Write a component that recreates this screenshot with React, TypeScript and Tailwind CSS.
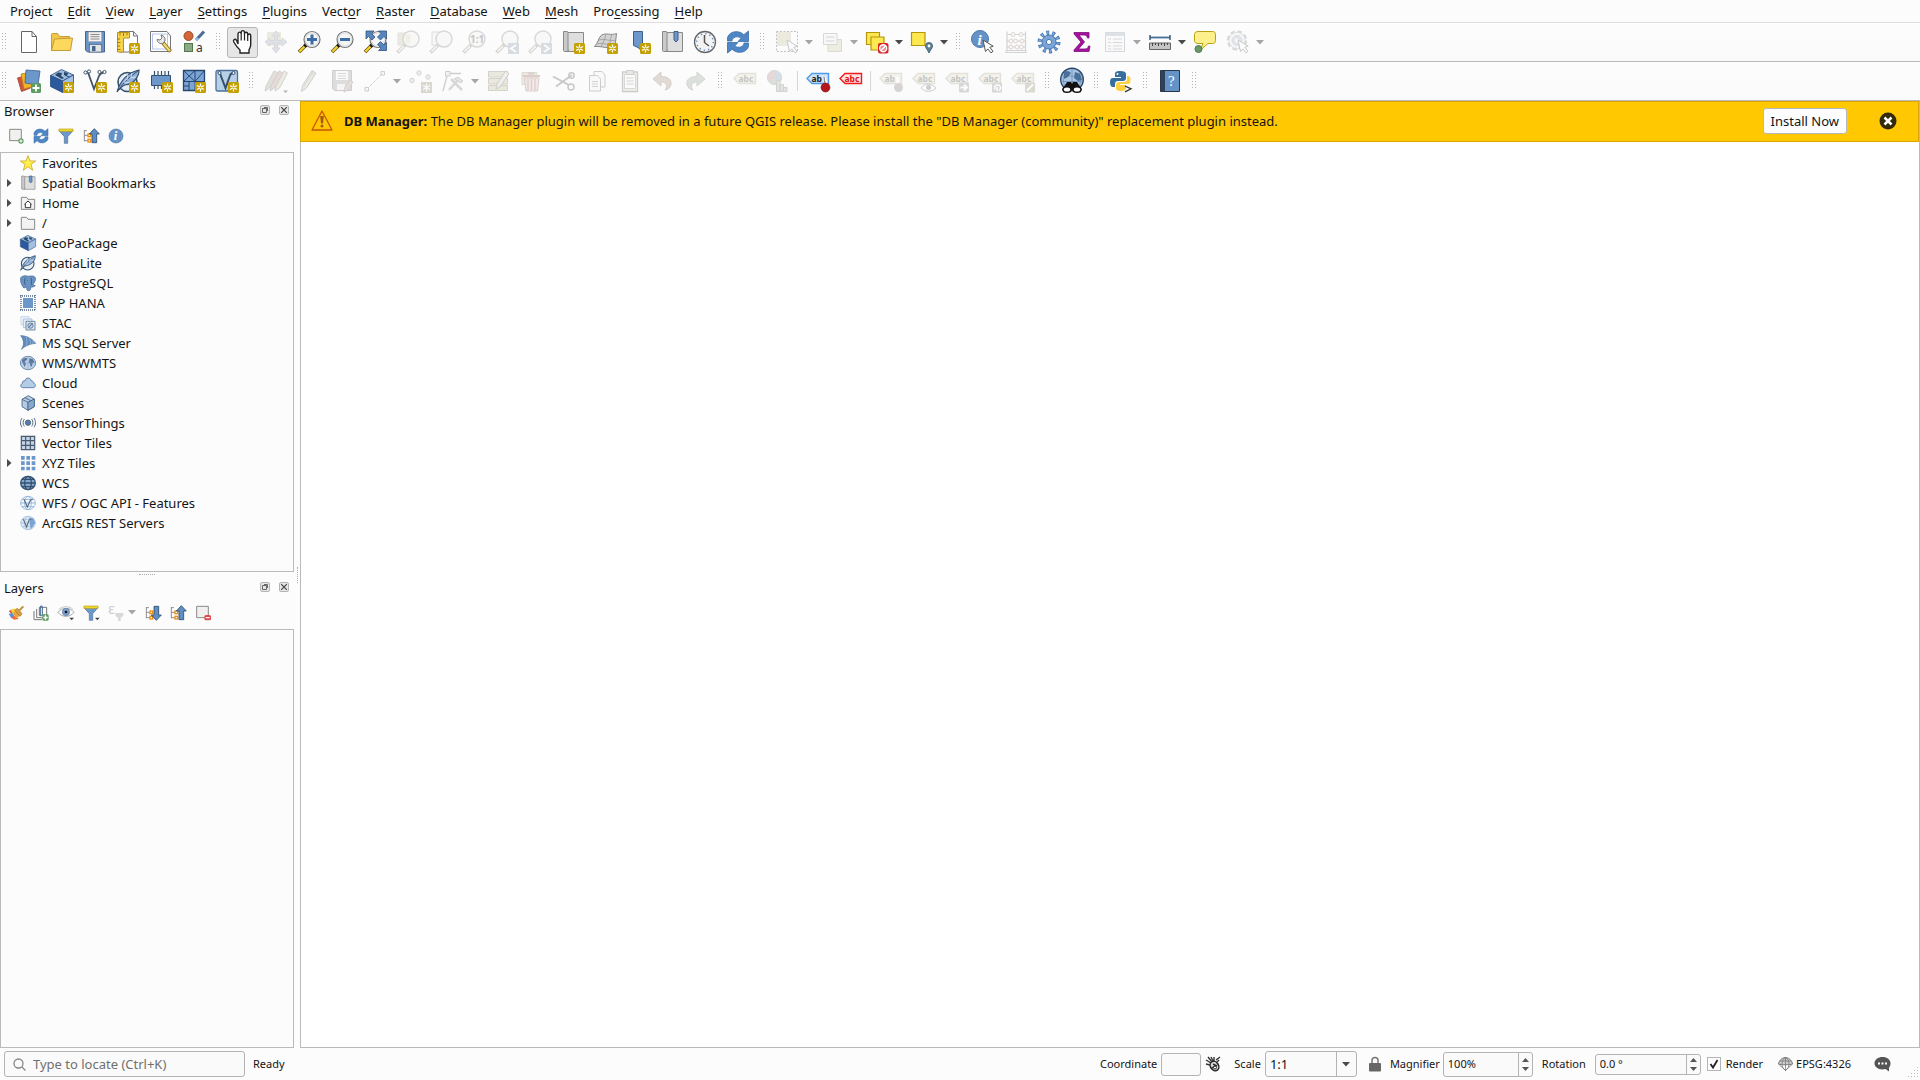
import React, { useState } from 'react';
import clsx from 'clsx';

type Tool = {
  name: string;
  icon?: React.ReactNode;
  disabled?: boolean;
  menu?: boolean;
  active?: boolean;
  separator?: boolean;
};

const Svg = ({ size = 24, children }: any) => (
  <svg width={size} height={size} viewBox="0 0 24 24" fill="none" className="block shrink-0 overflow-visible" aria-hidden="true">
    {children}
  </svg>
);

/* shared icon parts */
const NewBadge = () => (
  <g>
    <rect x="13" y="13" width="11" height="11" rx="1.5" fill="#c4a000" />
    <path d="M18.5 14.5v8M15 16.5l7 4M22 16.5l-7 4" stroke="#fff" strokeWidth="1.3" />
    <circle cx="18.5" cy="18.5" r="1" fill="#c4a000" />
  </g>
);

const Lens = () => (
  <g>
    <path d="M10 14 2 22" stroke="#5a4a10" strokeWidth="3.6" />
    <path d="M8 16 2.4 21.6" stroke="#f5cf2c" strokeWidth="2.2" />
    <path d="m7.5 16.5 2.5-2.5" stroke="#111" strokeWidth="3.4" />
    <circle cx="15" cy="9.5" r="8" fill="#f4f6f8" stroke="#777" strokeWidth="1.2" />
    <circle cx="15" cy="9.5" r="6.5" stroke="#ddd" />
  </g>
);

const GreyLens = () => (
  <g>
    <path d="M10 14 1.5 22.5" stroke="#777" strokeWidth="3.6" />
    <path d="M8 16 2.4 21.6" stroke="#e6e2c8" strokeWidth="1.8" />
    <circle cx="15" cy="9" r="8" fill="#f1f1f1" stroke="#888" strokeWidth="1.4" />
  </g>
);

const Cursor = () => (
  <path d="m12 10 2.5 11.5 2.3-2.6 3.2 4 2-1.600-3.200-4 3.400-1.100z" fill="#fff" stroke="#555" />
);

const RefreshArt = () => (
  <g fill="#4f86c6" stroke="#3a6ca8" strokeWidth=".8">
    <path d="M1.5 11V7.5C3 3 8 .8 13 2c2 .5 3.500 1.500 4.800 2.800L22.500 1v10.500H12l3-3.200c-2-2.200-6-2-8 .2-.7.700-1 1.600-1 2.500z" />
    <path d="M22.5 13v3.500c-1.500 4.500-6.500 6.700-11.500 5.500-2-.5-3.500-1.500-4.800-2.800L1.500 23V12.500H12l-3 3.200c2 2.200 6 2 8-.2.700-.7 1-1.600 1-2.500z" />
  </g>
);

const Feather = () => (
  <g>
    <circle cx="11.5" cy="13" r="9.5" fill="#e6edf5" stroke="#34516e" strokeWidth="1.6" />
    <path d="M1 23C4 13 10 4 23 1c0 7-5 14-14 15-3 1-5 3-8 7z" fill="#8fb0d8" stroke="#34516e" strokeWidth="1.2" />
    <path d="M3 21C7 14 13 8 22 2" stroke="#34516e" />
    <path d="m8 14 2-4m1 1 1-5m3 2 1-4M9 14l5-1m0-4 6-1" stroke="#e6edf5" strokeWidth=".8" />
  </g>
);

const PackageArt = () => (
  <g stroke="#274b7c" strokeWidth=".8">
    <path d="M.5 6.5 11.500.5l12 5.500-11 6z" fill="#9ebde0" />
    <path d="M.5 6.5 12.5 12v11.500L.5 17.500z" fill="#2c5a9e" />
    <path d="M12.5 12l11-6v11.500l-11 6z" fill="#a3c0e2" />
    <path d="m5 6 3-2.500 4 .5-1 3 3 2-2 1zM14 3l4 1-1 3h3l-2 1-4-2z" fill="#284668" stroke="none" />
  </g>
);

const GlobeArt = () => (
  <g>
    <ellipse cx="12" cy="12" rx="11.5" ry="10" fill="#bdd1e8" stroke="#5f80a5" strokeWidth="1.3" />
    <path d="M3 8c2-3 5-4 8-3l-1 3-3 1 2 4-2 5c-1-3-4-6-4-10zM14 5l5 1 3 5-3 1-1 4-2 2-1-5-2-2 1-3z" fill="#56779e" />
    <path d="M1 12h22M12 2v20" stroke="#8faccc" strokeWidth=".8" />
  </g>
);

const WireGlobe = ({ color, fill, width = 1.3 }: any) => (
  <g stroke={color} strokeWidth={width}>
    <ellipse cx="12" cy="12" rx="11" ry="10" fill={fill} />
    <ellipse cx="12" cy="12" rx="5" ry="10" />
    <path d="M1 12h22M3 6.500h18M3 17.500h18" />
  </g>
);

const BookArt = () => (
  <g>
    <path d="M6 2.5h16.500v19H7V19H2.500" fill="#dedede" stroke="#888" />
    <path d="M2.5 1.5h3.500c1 0 1 1 1 1v19H3.500c-1 0-1-1-1-1z" fill="#c9c9c9" stroke="#888" />
  </g>
);

const BookmarkArt = () => (
  <g>
    <BookArt />
    <path d="M14 1.5h4V10l-2 2-2-2z" fill="#6b97ca" stroke="#3c5f8b" />
  </g>
);

const TagArt = ({ text = 'abc', fill = '#e0ddc6', stroke = '#aaa78f', color = '#444' }: any) => (
  <g>
    <path d="M6 4.5h16.500v10H6l-5-5z" fill={fill} stroke={stroke} strokeWidth="1.4" />
    <text x="5.5" y="12.5" fontSize="8.5" fontWeight="700" fontFamily="Noto Sans, sans-serif" fill={color}>
      {text}
    </text>
  </g>
);

const TreeLines = () => (
  <g>
    <path d="M2 3v17M2 4h4M2 11h6M2 19h6" stroke="#888" strokeWidth="1.4" />
    <rect x="7.5" y="9" width="4" height="4" fill="#fff" stroke="#f28c13" strokeWidth="2" />
    <rect x="7.5" y="17" width="4" height="4" fill="#fff" stroke="#f28c13" strokeWidth="2" />
  </g>
);

const CollapseArt = () => (
  <g>
    <TreeLines />
    <path d="M17 1 9.5 9h4v13h7V9h4z" fill="#5f8ec2" stroke="#27466b" strokeWidth="1.2" />
  </g>
);

const ExpandArt = () => (
  <g>
    <TreeLines />
    <path d="m17 23-7.500-8h4V2h7v13h4z" fill="#5f8ec2" stroke="#27466b" strokeWidth="1.2" />
  </g>
);

const FunnelArt = () => (
  <g>
    <path d="M1.5 4h21l-8 9v10h-5V13z" fill="#6c98cc" stroke="#4a6f99" />
    <path d="M1.5 1.5h21V5h-21z" fill="#f4dc2b" stroke="#b79e17" />
  </g>
);

const fileTools: Tool[] = [
  {
    name: 'New Project',
    icon: (
      <Svg>
        <path d="M4.5 1.5H15l4.500 5v16h-15z" fill="#fff" stroke="#666" />
        <path d="M15 1.5v5h4.500" stroke="#666" />
      </Svg>
    ),
  },
  {
    name: 'Open Project',
    icon: (
      <Svg>
        <path d="M1.500 20.5V4.500c0-.6.400-1 1-1h5l2 3h10v3" fill="#f3c84a" stroke="#c39a35" />
        <path d="m1.500 20.5 3-11.500 18-1-2 12.500z" fill="#fdd85d" stroke="#c39a35" />
      </Svg>
    ),
  },
  {
    name: 'Save Project',
    icon: (
      <Svg>
        <path d="M2.5 1.5h19v20.500H4.500l-2-2z" fill="#6b94c6" stroke="#46658d" />
        <rect x="5.5" y="2" width="13" height="9.5" fill="#f2f2f2" stroke="#aaa" strokeWidth=".6" />
        <path d="M7.5 4.5h9M7.5 6.700h9M7.5 9h9" stroke="#888" />
        <rect x="6.5" y="14.5" width="12" height="7.5" fill="#e4e4e4" stroke="#46658d" strokeWidth=".7" />
        <rect x="9" y="16" width="3.5" height="5" fill="#46658d" />
      </Svg>
    ),
  },
  {
    name: 'New Print Layout',
    icon: (
      <Svg>
        <path d="M3.5 1.5h14l4 4.500v16h-18z" fill="#fff" stroke="#777" />
        <path d="M17.5 1.5V6h4" stroke="#777" />
        <path d="M1.500 2.500h12v5.500H7.500v14h-6z" fill="#f7d34a" stroke="#b8921b" />
        <path d="M4 3v2.500M7.500 3v3M11 3v2.500M1 9h3M1 12.500h3.500M1 16h3M1 19.500h3.500" stroke="#9b7a12" />
        <NewBadge />
      </Svg>
    ),
  },
  {
    name: 'Layout Manager',
    icon: (
      <Svg>
        <path d="M1.5 1.5H18l3.500 4.500v15.500h-20z" fill="#fff" stroke="#777" />
        <rect x="3.5" y="4" width="15" height="15" stroke="#b4c6ee" />
        <path d="m14 13 7.500 8.500" stroke="#8b7216" strokeWidth="4" />
        <path d="m14.500 13.500 6.500 7.500" stroke="#f0d77a" strokeWidth="2.2" />
        <path d="M8 9.500c.5 3.500 3.500 4.500 5.500 4l2.500-2.500c.5-3-1-5.500-4-6l1 3-2 2z" fill="#e8e8e8" stroke="#777" />
      </Svg>
    ),
  },
  {
    name: 'Style Manager',
    icon: (
      <Svg>
        <circle cx="6.5" cy="6" r="4.5" fill="#d2683a" stroke="#9c4420" />
        <path d="m14 10 8-8.500" stroke="#4a6f99" strokeWidth="3.2" />
        <path d="m14 10 2-2" stroke="#9dbbe0" strokeWidth="3" />
        <rect x="2.5" y="13.5" width="8" height="8" fill="#8aa984" stroke="#4f7a4a" />
        <text x="14" y="22" fontSize="12" fontFamily="Noto Sans, sans-serif" fill="#333">
          a
        </text>
      </Svg>
    ),
  },
];

const navTools: Tool[] = [
  {
    name: 'Pan Map',
    active: true,
    icon: (
      <Svg>
        <path
          d="M7 14V4c0-2.500 3.200-2.500 3.200 0V2.500c0-2.500 3.300-2.500 3.300 0V4c0-2.300 3.200-2.300 3.200 0v1.500c0-2 3-2 3 0V15c0 2-1 3-1.700 5v3H9v-3C6.500 18 4.500 15 2.800 12c-1.200-2.400 1.400-3.600 2.700-1.700z"
          fill="#fff"
          stroke="#222"
          strokeWidth="1.4"
        />
        <path d="M10.200 4v6.500M13.500 4v6.500M16.700 5v6" stroke="#222" strokeWidth="1.2" />
      </Svg>
    ),
  },
  {
    name: 'Pan Map to Selection',
    disabled: true,
    icon: (
      <Svg>
        <rect x="3" y="2" width="14" height="14" fill="#c9c49c" />
        <path
          d="m12 1 4 5h-2.500v4.500H18V8l5 4-5 4v-2.500h-4.500V18H16l-4 5-4-5h2.500v-4.500H6V16l-5-4 5-4v2.500h4.500V6H8z"
          fill="#9aa5b3"
          stroke="#7f8a98"
        />
      </Svg>
    ),
  },
  {
    name: 'Zoom In',
    icon: (
      <Svg>
        <Lens />
        <path d="M15 4.500v10M10 9.500h10" stroke="#3c6ca4" strokeWidth="3" />
      </Svg>
    ),
  },
  {
    name: 'Zoom Out',
    icon: (
      <Svg>
        <Lens />
        <path d="M10 9.500h10" stroke="#3c6ca4" strokeWidth="3" />
      </Svg>
    ),
  },
  {
    name: 'Zoom Full',
    icon: (
      <Svg>
        <Lens />
        <g fill="#5686bd" stroke="#2f5482" strokeWidth=".8">
          <path d="M3 1h8L8.500 3.500 12 7 9 10 5.500 6.500 3 9z" />
          <path d="M23.500 1h-8L18 3.500 14.500 7l3 3L21 6.500 23.500 9z" />
          <path d="M23.500 20.500h-8L18 18l-3.500-3.500 3-3L21 15l2.500-2.500z" />
        </g>
      </Svg>
    ),
  },
  {
    name: 'Zoom to Selection',
    disabled: true,
    icon: (
      <Svg>
        <rect x="2" y="3" width="12" height="12" fill="#c9c49c" stroke="#aaa" />
        <GreyLens />
        <path d="M9.500 4.500h5v9h-5z" fill="#d8d4b4" />
      </Svg>
    ),
  },
  {
    name: 'Zoom to Layer',
    disabled: true,
    icon: (
      <Svg>
        <rect x="3" y="2" width="11" height="13" fill="#f0f0f0" stroke="#999" />
        <GreyLens />
      </Svg>
    ),
  },
  {
    name: 'Zoom to Native Resolution',
    disabled: true,
    icon: (
      <Svg>
        <GreyLens />
        <text x="8" y="12.500" fontSize="10" fontWeight="700" fontFamily="Noto Sans, sans-serif" fill="#444">
          1:1
        </text>
      </Svg>
    ),
  },
  {
    name: 'Zoom Last',
    disabled: true,
    icon: (
      <Svg>
        <GreyLens />
        <rect x="13" y="13" width="11" height="11" fill="#8597ab" />
        <path d="m21 15-5 3.500 5 3.500" stroke="#fff" strokeWidth="2" />
      </Svg>
    ),
  },
  {
    name: 'Zoom Next',
    disabled: true,
    icon: (
      <Svg>
        <GreyLens />
        <rect x="13" y="13" width="11" height="11" fill="#8597ab" />
        <path d="m16 15 5 3.500-5 3.500" stroke="#fff" strokeWidth="2" />
      </Svg>
    ),
  },
  {
    name: 'New Map View',
    icon: (
      <Svg>
        <BookArt />
        <NewBadge />
      </Svg>
    ),
  },
  {
    name: 'New 3D Map View',
    icon: (
      <Svg>
        <path d="M7 5.500C12 2 17 6 22.500 3.500L21 17C14 19 8 16 .5 16.500 4 13 4 9 7 5.500z" fill="#d4d4d4" stroke="#888" />
        <path d="M5 10c6-2 11 2 17 0M3 14c6-2 12 2 18 0M12 4.500C11 9 9 13 7 16.500M17.500 5 15 17" stroke="#999" strokeWidth=".8" />
        <NewBadge />
      </Svg>
    ),
  },
  {
    name: 'New Spatial Bookmark',
    icon: (
      <Svg>
        <path d="M6.500 1.500h9v20l-4.500-4-4.500-2z" fill="#6b97ca" stroke="#3c5f8b" />
        <NewBadge />
      </Svg>
    ),
  },
  {
    name: 'Show Spatial Bookmarks',
    icon: (
      <Svg>
        <BookmarkArt />
      </Svg>
    ),
  },
  {
    name: 'Temporal Controller',
    icon: (
      <Svg>
        <circle cx="12" cy="12" r="10.500" fill="#f3f3f3" stroke="#666" strokeWidth="1.3" />
        <circle cx="12" cy="12" r="8.3" stroke="#5b8ac0" strokeWidth="1.5" strokeDasharray="1.2 3.146" />
        <path d="M11.500 5v7.500l4.500 3.500" stroke="#555" strokeWidth="1.5" />
      </Svg>
    ),
  },
  {
    name: 'Refresh',
    icon: (
      <Svg>
        <RefreshArt />
      </Svg>
    ),
  },
];

const selectTools: Tool[] = [
  {
    name: 'Select Features',
    disabled: true,
    menu: true,
    icon: (
      <Svg>
        <rect x="2" y="2" width="14" height="14" fill="#c9c49c" />
        <path d="M1.500 1.500h21v20h-21z" stroke="#444" strokeDasharray="2 1.500" />
        <Cursor />
      </Svg>
    ),
  },
  {
    name: 'Select Features by Value',
    disabled: true,
    menu: true,
    icon: (
      <Svg>
        <path d="M8 9.500h13.500v12H8z" fill="#d0cba6" stroke="#999070" />
        <path d="M3.500 3.500H17v11H3.500z" fill="#f2f2f2" stroke="#888" />
        <path d="M6 7h8.500M6 11h8.500" stroke="#777" />
      </Svg>
    ),
  },
  {
    name: 'Deselect Features',
    menu: true,
    icon: (
      <Svg>
        <path d="M1.500 2.500h13v12h-13z" fill="#fde84f" stroke="#b8960c" strokeWidth="1.2" />
        <path d="M6 7h13v13H6z" fill="#fde84f" stroke="#b8960c" strokeWidth="1.2" />
        <rect x="13" y="13" width="10.5" height="10.5" rx="2" fill="#d8232a" />
        <circle cx="18.2" cy="18.2" r="3.5" fill="#e98b8e" stroke="#fff" strokeWidth="1.4" />
        <path d="m16 20.500 4.500-4.500" stroke="#fff" strokeWidth="1.4" />
      </Svg>
    ),
  },
  {
    name: 'Select by Location',
    menu: true,
    icon: (
      <Svg>
        <path d="M1.500 2.500H15v13H1.500z" fill="#fde84f" stroke="#b8960c" strokeWidth="1.2" />
        <path d="M19 23c-1-3-3.500-4.500-3.500-7a3.500 3.500 0 0 1 7 0c0 2.500-2.500 4-3.500 7z" fill="#5d8199" stroke="#486879" />
        <circle cx="19" cy="16" r="1.4" fill="#fff" />
      </Svg>
    ),
  },
];

const attributeTools: Tool[] = [
  {
    name: 'Identify Features',
    icon: (
      <Svg>
        <circle cx="9" cy="9" r="8.5" fill="#6693c7" stroke="#4e79ab" />
        <text x="6.5" y="14.5" fontSize="15" fontStyle="italic" fontWeight="700" fontFamily="Liberation Serif, serif" fill="#fff">
          i
        </text>
        <Cursor />
      </Svg>
    ),
  },
  {
    name: 'Field Calculator',
    disabled: true,
    icon: (
      <Svg>
        <path d="M3 1.500v20M21.500 1.500v20M1 22.500h22M1.500 20.500h21M3 4.500h18M3 11h18M3 17h18" stroke="#777" strokeWidth="1.2" />
        <g fill="#f5eeee" stroke="#977">
          <circle cx="9" cy="4.5" r="2" />
          <circle cx="17" cy="4.5" r="2" />
          <circle cx="7" cy="11" r="2" />
          <circle cx="11.5" cy="11" r="2" />
          <circle cx="18" cy="11" r="2" />
          <circle cx="7" cy="17" r="2" />
          <circle cx="13" cy="17" r="2" />
          <circle cx="17.5" cy="17" r="2" />
        </g>
      </Svg>
    ),
  },
  {
    name: 'Processing Toolbox',
    icon: (
      <Svg>
        <circle cx="12" cy="12" r="9.3" stroke="#4679b5" strokeWidth="4.4" strokeDasharray="2.9 2.943" />
        <circle cx="12" cy="12" r="9.3" stroke="#7ba5d8" strokeWidth="2.8" strokeDasharray="1.5 4.343" strokeDashoffset="-.7" />
        <circle cx="12" cy="12" r="7" fill="#7ba5d8" stroke="#4679b5" />
        <circle cx="12" cy="12" r="2.6" fill="#fff" stroke="#4679b5" />
      </Svg>
    ),
  },
  {
    name: 'Statistical Summary',
    icon: (
      <Svg>
        <path d="M4 2.500h15V8h-1.500c-.5-2-1.500-3-3.500-3H9l5.500 7L8.500 19H15c2 0 3-1 3.500-3H20l-1 5.500H4V20l7-8-7-8z" fill="#a8109f" stroke="#7c0f78" strokeWidth=".8" />
      </Svg>
    ),
  },
  {
    name: 'Open Attribute Table',
    disabled: true,
    menu: true,
    icon: (
      <Svg>
        <path d="M2.500 2.500h19v19h-19z" fill="#f7f7f7" stroke="#7e8894" />
        <path d="M2.500 2.500h19V6h-19z" fill="#9ba6b3" />
        <path d="M5 9h3M10 9h9M5 12.500h3M10 12.500h9M5 16h3M10 16h9M5 19h3M10 19h9" stroke="#7e8894" strokeWidth="1.2" />
      </Svg>
    ),
  },
  {
    name: 'Measure Line',
    menu: true,
    icon: (
      <Svg>
        <path d="M2 7.500h20" stroke="#4a6f99" strokeWidth="1.8" />
        <path d="M2 5v5M22 5v5" stroke="#34516e" strokeWidth="1.4" />
        <path d="M1.500 13h21v6.500h-21z" fill="#c4c4c4" stroke="#666" />
        <path d="M4.500 13v3M7.500 13v2M10.500 13v3M13.500 13v2M16.500 13v3M19.500 13v2" stroke="#444" />
      </Svg>
    ),
  },
  {
    name: 'Map Tips',
    icon: (
      <Svg>
        <path d="M5 1.500h14.500c2 0 3 1 3 3v6c0 2-1 3-3 3H15L7.500 20 10 13.500H5c-2 0-3.500-1-3.500-3v-6c0-2 1.500-3 3.500-3z" fill="#fdf08c" stroke="#b9a008" />
        <circle cx="5.5" cy="19" r="3.5" fill="#699a66" stroke="#4f7a4a" />
      </Svg>
    ),
  },
  {
    name: 'Run Feature Action',
    disabled: true,
    menu: true,
    icon: (
      <Svg>
        <circle cx="11" cy="10.5" r="9" stroke="#888" strokeWidth="2.4" strokeDasharray="4.5 2.6" />
        <circle cx="11" cy="10.5" r="8" fill="#eee" stroke="#999" />
        <circle cx="11" cy="10.5" r="5" fill="#a7b3c0" stroke="#8f9aa6" />
        <path d="m9.500 8 4 2.500-4 2.500z" fill="#fff" />
        <Cursor />
      </Svg>
    ),
  },
];

const sourceTools: Tool[] = [
  {
    name: 'Data Source Manager',
    icon: (
      <Svg>
        <path d="m.5 9 10-3 3 13-9 3.500z" fill="#d2553a" stroke="#a03a24" strokeWidth=".8" />
        <path d="m4 5 11-2 3 14-11 3z" fill="#f0b429" stroke="#b5831a" strokeWidth=".8" />
        <path d="m9 1 14 1-2 14-13-2z" fill="#6b97ca" stroke="#3c5f8b" strokeWidth=".8" />
        <rect x="14" y="14" width="10" height="10" rx="1.5" fill="#5d9d63" />
        <path d="M19 15.500v7M15.500 19h7" stroke="#fff" strokeWidth="1.8" />
      </Svg>
    ),
  },
  {
    name: 'New GeoPackage Layer',
    icon: (
      <Svg>
        <PackageArt />
        <NewBadge />
      </Svg>
    ),
  },
  {
    name: 'New Shapefile Layer',
    icon: (
      <Svg>
        <path d="M2 3.500h3L11 20l5-13c1-2.500 3-3.500 5.500-4" stroke="#41546a" strokeWidth="1.8" />
        <circle cx="2.5" cy="3.5" r="1.6" fill="#fff" stroke="#41546a" />
        <circle cx="6" cy="2.5" r="1.6" fill="#fff" stroke="#41546a" />
        <circle cx="16.5" cy="3" r="1.6" fill="#fff" stroke="#41546a" />
        <circle cx="21.5" cy="3" r="1.6" fill="#fff" stroke="#41546a" />
        <NewBadge />
      </Svg>
    ),
  },
  {
    name: 'New SpatiaLite Layer',
    icon: (
      <Svg>
        <Feather />
        <NewBadge />
      </Svg>
    ),
  },
  {
    name: 'New Temporary Scratch Layer',
    icon: (
      <Svg>
        <path d="M5.500 2v18M9 2v18M12.500 2v18M16 2v18M19.500 2v18" stroke="#34516e" strokeWidth="1.2" />
        <path d="M2.500 6.500h19v10h-19z" fill="#6b97ca" stroke="#34516e" />
        <NewBadge />
      </Svg>
    ),
  },
  {
    name: 'New Mesh Layer',
    icon: (
      <Svg>
        <path d="M1.500 1.500h21v20h-21z" fill="#7ba5d8" stroke="#27466b" strokeWidth="1.3" />
        <path d="M1.500 12.500h21M13 1.500v20M1.500 1.500l11.500 11M13 1.500l-11.500 11M13 12.500l9.500-11M7 12.500v9M1.500 17H7" stroke="#27466b" />
        <NewBadge />
      </Svg>
    ),
  },
  {
    name: 'New Virtual Layer',
    icon: (
      <Svg>
        <rect x="1" y="1.5" width="21.5" height="20.5" rx="1.5" fill="#b8cfe8" stroke="#4a6f99" strokeWidth="1.3" />
        <path d="M5 4.500 10.500 19 15 6.500c.5-2 2-2.500 4-2.500" stroke="#34516e" strokeWidth="2" />
        <circle cx="4.5" cy="4" r="1.5" fill="#fff" stroke="#34516e" />
        <circle cx="18.5" cy="4" r="1.5" fill="#fff" stroke="#34516e" />
        <NewBadge />
      </Svg>
    ),
  },
];

const editTools: Tool[] = [
  {
    name: 'Current Edits',
    disabled: true,
    icon: (
      <Svg>
        <path d="m1 22 1-5 8-15 4 2L5.500 19z" fill="#a8a18c" stroke="#776" />
        <path d="m6 22 1-5 8-15 4 2-8.500 15z" fill="#b58f88" stroke="#866" />
        <path d="m11 22 1-5 8-15 3.500 2-8 15z" fill="#c9c4a6" stroke="#776" />
        <path d="M19 21.500h5L21.500 24z" fill="#111" />
      </Svg>
    ),
  },
  {
    name: 'Toggle Editing',
    disabled: true,
    icon: (
      <Svg>
        <path d="m4.500 22.500 1-6L15 1.500l4 2.500-9.500 15z" fill="#c9c4a6" stroke="#666" />
        <path d="m13.500 4 4 2.500M7 17 16 3" stroke="#888" />
      </Svg>
    ),
  },
  {
    name: 'Save Layer Edits',
    disabled: true,
    icon: (
      <Svg>
        <path d="M2.500 1.500h19v20h-17l-2-2z" fill="#999" stroke="#666" />
        <path d="M6 2h12v9H6z" fill="#f4f4f4" />
        <path d="M8 4.500h8M8 7h8M8 9.500h8" stroke="#888" />
        <path d="M7 15h8v6H7z" fill="#e8e8e8" />
        <path d="m14 23 1-5 5-7 3 2-5 8z" fill="#b5a090" stroke="#866" />
      </Svg>
    ),
  },
  {
    name: 'Digitize with Segment',
    disabled: true,
    menu: true,
    icon: (
      <Svg>
        <path d="m4 20 15-15" stroke="#666" strokeDasharray="3 1.500" />
        <path d="M2 18.500h3.500V22H2zM18 2.500h3.500V6H18z" fill="#eee" stroke="#666" />
      </Svg>
    ),
  },
  {
    name: 'Add Record',
    disabled: true,
    icon: (
      <Svg>
        <g fill="#ccc" stroke="#777">
          <circle cx="11" cy="4" r="2.2" />
          <circle cx="4" cy="11.500" r="2.2" />
          <circle cx="20" cy="8" r="2.2" />
        </g>
        <rect x="13" y="13" width="11" height="11" fill="#8d866a" />
        <path d="M18.500 14.500v8M15 16.500l7 4M22 16.500l-7 4" stroke="#fff" strokeWidth="1.3" />
      </Svg>
    ),
  },
  {
    name: 'Vertex Tool',
    disabled: true,
    menu: true,
    icon: (
      <Svg>
        <path d="M2 22 6.500 5M7 4.500h13" stroke="#666" strokeWidth="1.3" />
        <path d="M4.500 2.500H9V7H4.500z" fill="#ddd" stroke="#666" />
        <path d="m8 21 9-10M10 10l11 11" stroke="#888" strokeWidth="2.5" />
        <path d="m13 10 4-2 5 4-2 2z" fill="#aaa" stroke="#777" />
      </Svg>
    ),
  },
  {
    name: 'Modify Attributes',
    disabled: true,
    icon: (
      <Svg>
        <path d="M2.500 2.500h19V8h-19zM2.500 9.500h19V15h-19zM2.500 16.500h19v5h-19z" fill="#c4bf97" stroke="#7a785c" />
        <path d="m10 20 1-5L19.500 2 23 4.500 14 18z" fill="#d5cfcf" stroke="#665" />
      </Svg>
    ),
  },
  {
    name: 'Delete Selected',
    disabled: true,
    icon: (
      <Svg>
        <path d="M3 3.500h15v12H3z" fill="#c9c49c" stroke="#998" />
        <path d="M3 7h18M9 4.500h6" stroke="#966" strokeWidth="2" />
        <path d="M5.500 9H20l-1.500 13H7z" fill="#dcc0c0" stroke="#966" />
        <path d="M9 10v11M12.500 10v11M16 10v11" stroke="#966" strokeWidth="1.3" />
      </Svg>
    ),
  },
  {
    name: 'Cut Features',
    disabled: true,
    icon: (
      <Svg>
        <path d="M1 7.500 17 16M4 17.500 20 6" stroke="#555" strokeWidth="1.8" />
        <circle cx="19.5" cy="6.5" r="2.7" stroke="#555" strokeWidth="1.5" />
        <circle cx="19" cy="18" r="3" stroke="#555" strokeWidth="1.5" />
      </Svg>
    ),
  },
  {
    name: 'Copy Features',
    disabled: true,
    icon: (
      <Svg>
        <path d="M9 2.500h8l3 3.500v12H9z" fill="#f5f5f5" stroke="#666" />
        <path d="M4.500 6.500h8l3 3.500v12h-11z" fill="#f5f5f5" stroke="#666" />
        <path d="M7 12.500h6M7 15h6M7 17.500h6" stroke="#777" />
      </Svg>
    ),
  },
  {
    name: 'Paste Features',
    disabled: true,
    icon: (
      <Svg>
        <path d="M4.500 3h15v19.500h-15z" fill="#dcd7c0" stroke="#666" strokeWidth="1.3" />
        <path d="M6.500 5.500h11v14h-11z" fill="#fafafa" stroke="#888" />
        <path d="M8.500 1.500h7v4h-7z" fill="#bbb" stroke="#666" />
        <path d="M8.500 9h7M8.500 12h7M8.500 15h7" stroke="#777" />
      </Svg>
    ),
  },
  {
    name: 'Undo',
    disabled: true,
    icon: (
      <Svg>
        <path d="m2 10 8-7v4.500c7 0 11 3 10 8-.5 3-3 5-6 5.500 2-2.500 3-8-4-8V17z" fill="#a88d80" stroke="#86695a" />
      </Svg>
    ),
  },
  {
    name: 'Redo',
    disabled: true,
    icon: (
      <Svg>
        <path d="m21 10-8-7v4.500c-7 0-11 3-10 8 .5 3 3 5 6 5.500-2-2.500-3-8 4-8V17z" fill="#98a394" stroke="#788374" />
      </Svg>
    ),
  },
];

const labelTools: Tool[] = [
  {
    name: 'Layer Labeling Options',
    disabled: true,
    icon: (
      <Svg>
        <TagArt />
      </Svg>
    ),
  },
  {
    name: 'Layer Diagram Options',
    disabled: true,
    icon: (
      <Svg>
        <circle cx="8.5" cy="8.5" r="7" fill="#8fa38f" stroke="#777" />
        <path d="M8.500 8.500V1.500a7 7 0 0 1 5 12z" fill="#8398b0" />
        <path d="m8.500 8.500-6 4a7 7 0 0 1 6-11z" fill="#b88484" />
        <path d="M10.500 11.500H14v11h-3.500zM14 15.500h3.500v7H14zM17.500 18.500H21v4h-3.500z" fill="#a3b3a8" stroke="#777" />
      </Svg>
    ),
  },
  { name: 'label-options', separator: true },
  {
    name: 'Highlight Pinned Labels',
    icon: (
      <Svg>
        <TagArt text="ab" fill="#cfe4fb" stroke="#4f9be8" color="#222" />
        <path d="m18 8 2 7" stroke="#fff" strokeWidth="3" />
        <path d="m18 8 1 7" stroke="#888" strokeWidth="1.3" />
        <circle cx="19.5" cy="18.5" r="4.5" fill="#b3181e" stroke="#8a1015" strokeWidth=".6" />
      </Svg>
    ),
  },
  {
    name: 'Toggle Unplaced Labels',
    icon: (
      <Svg>
        <TagArt fill="#ffe3e3" stroke="#ee1c1c" color="#e01010" />
      </Svg>
    ),
  },
  { name: 'label-edit', separator: true },
  {
    name: 'Pin Labels',
    disabled: true,
    icon: (
      <Svg>
        <TagArt text="ab" />
        <path d="m18 8 1 7" stroke="#fff" strokeWidth="3" />
        <circle cx="19.5" cy="18.5" r="4.5" fill="#857878" />
      </Svg>
    ),
  },
  {
    name: 'Show Labels',
    disabled: true,
    icon: (
      <Svg>
        <TagArt />
        <path d="M9 19c4-5 10-5 15 0-5 4.500-11 4.500-15 0z" fill="#fff" stroke="#666" />
        <circle cx="16.5" cy="18.5" r="2.5" fill="#666" />
      </Svg>
    ),
  },
  {
    name: 'Move Label',
    disabled: true,
    icon: (
      <Svg>
        <TagArt />
        <rect x="14" y="13.5" width="10" height="10" rx="1" fill="#888" />
        <path d="M15.500 18.500h6M19 15.500l3 3-3 3" stroke="#fff" strokeWidth="1.8" />
      </Svg>
    ),
  },
  {
    name: 'Rotate Label',
    disabled: true,
    icon: (
      <Svg>
        <TagArt />
        <rect x="14" y="13.5" width="10" height="10" rx="1" fill="#888" />
        <path d="M17 20.500a3 3 0 1 1 4 1M19 18v4" stroke="#fff" strokeWidth="1.6" />
      </Svg>
    ),
  },
  {
    name: 'Change Label Properties',
    disabled: true,
    icon: (
      <Svg>
        <TagArt />
        <rect x="14" y="13.5" width="10" height="10" rx="1" fill="#959072" />
        <path d="m16 21.500 6-6" stroke="#fff" strokeWidth="2" />
      </Svg>
    ),
  },
];

const searchTools: Tool[] = [
  {
    name: 'MetaSearch',
    icon: (
      <Svg>
        <circle cx="12" cy="10.5" r="11.3" fill="#a9c4e2" stroke="#27466b" strokeWidth="1.4" />
        <path d="M1 7h22M1 12.500h22M12 0v20M5 3c-2 5-2 10 0 15M19 3c2 5 2 10 0 15" stroke="#6c8fb8" strokeWidth=".8" />
        <path d="M4 3c3-2 5-1 7 1l-3 4-4 2zM15 3l5 2 2 6-4 1-4-3z" fill="#4a6f99" />
        <path d="M7 13h4l1 2 1-2h4l5 8H2z" fill="#111" />
        <ellipse cx="7" cy="20.5" rx="4" ry="2.8" fill="#fff" stroke="#111" strokeWidth="1.5" />
        <ellipse cx="17" cy="20.5" rx="4" ry="2.8" fill="#fff" stroke="#111" strokeWidth="1.5" />
      </Svg>
    ),
  },
];

const pythonTools: Tool[] = [
  {
    name: 'Python Console',
    icon: (
      <Svg>
        <path d="M11 2c-4 0-5 1-5 3v3h6v1H4c-2.500 0-3 2-3 4.500S2 18 4 18h2v-3c0-2 1-3 3-3h5c2 0 3-1 3-3V5c0-2-2-3-6-3z" fill="#366f9e" />
        <path d="M12 22c4 0 5-1 5-3v-3h-6v-1h8c2 0 2.500-2 2.500-4S21 7 19 7h-1v3c0 2-1 3-3 3h-5c-2 0-3 1-3 3v3c0 2 1 3 5 3z" fill="#fbd13f" />
        <circle cx="8.5" cy="5" r="1" fill="#fff" />
        <path d="m16 17 6 2.800-6 3" stroke="#333" strokeWidth="1.3" />
      </Svg>
    ),
  },
];

const helpTools: Tool[] = [
  {
    name: 'Help Contents',
    icon: (
      <Svg>
        <path d="M2.500 1.500h19v21h-19z" fill="#6693c7" stroke="#27364a" />
        <path d="M2.500 1.500H7v21H2.500z" fill="#2f4157" />
        <text x="10" y="17" fontSize="15" fontFamily="Liberation Serif, serif" fill="#fff">
          ?
        </text>
      </Svg>
    ),
  },
];

const browserTools: Tool[] = [
  {
    name: 'Add Selected Layers',
    icon: (
      <Svg size={16}>
        <path d="M2.500 2H20v17H2.500z" fill="#f0f0ee" stroke="#8a8a85" strokeWidth="1.5" />
        <circle cx="19.5" cy="19.5" r="4" fill="#5d9d63" />
        <path d="M19.500 17v5M17 19.500h5" stroke="#fff" strokeWidth="1.5" />
      </Svg>
    ),
  },
  {
    name: 'Refresh Browser',
    icon: (
      <Svg size={16}>
        <RefreshArt />
      </Svg>
    ),
  },
  {
    name: 'Filter Browser',
    icon: (
      <Svg size={16}>
        <FunnelArt />
      </Svg>
    ),
  },
  {
    name: 'Collapse All',
    icon: (
      <Svg size={16}>
        <CollapseArt />
      </Svg>
    ),
  },
  {
    name: 'Enable Properties Widget',
    icon: (
      <Svg size={16}>
        <circle cx="12" cy="12" r="10.5" fill="#6693c7" stroke="#4e79ab" />
        <text x="8.5" y="18.5" fontSize="19" fontStyle="italic" fontWeight="700" fontFamily="Liberation Serif, serif" fill="#fff">
          i
        </text>
      </Svg>
    ),
  },
];

const layerTools: Tool[] = [
  {
    name: 'Open Layer Styling',
    icon: (
      <Svg size={16}>
        <path d="M1 9 8 6l3 4-6 3z" fill="#e9483b" />
        <path d="m4 7 6-2 3 6-6 2z" fill="#f8d63a" />
        <path d="m1 13 6-1 3 6-5 2z" fill="#5a8fd8" />
        <path d="m5 19 6-4 5 6-7 1z" fill="#f26a3a" />
        <path d="m7 12 5 8 8-5-6-8z" fill="#e9a63f" />
        <path d="m10 8 8 9 3-4-7-8z" fill="#d59c45" stroke="#a0702a" />
        <path d="m17 8 6-6" stroke="#c48b3a" strokeWidth="3" />
      </Svg>
    ),
  },
  {
    name: 'Add Group',
    icon: (
      <Svg size={16}>
        <path d="M1.500 9v13h12M5.500 6v13h12M9.500 3.500h11v12h-11z" stroke="#777" strokeWidth="1.5" />
        <path d="M11 17V3c0-2 3-2 3 0v12" stroke="#4a6f99" strokeWidth="1.6" />
        <rect x="14" y="14" width="9.5" height="9.5" rx="2" fill="#5d9d63" />
        <path d="M18.700 15.500v6.500M15.500 18.700H22" stroke="#fff" strokeWidth="2" />
      </Svg>
    ),
  },
  {
    name: 'Manage Map Themes',
    icon: (
      <Svg size={16}>
        <path d="M0 11C6 3 18 3 24 11c-6 8-18 8-24 0z" fill="#fff" stroke="#999" strokeWidth="1.3" />
        <path d="M1 7c6-6 16-6 22 0" stroke="#aaa" />
        <circle cx="12" cy="10.5" r="5.5" fill="#7ba0cc" stroke="#5a7fab" />
        <circle cx="12" cy="10.5" r="2" fill="#111" />
        <path d="M17 19h7l-3.500 4z" fill="#444" />
      </Svg>
    ),
  },
  {
    name: 'Filter Legend',
    icon: (
      <Svg size={16}>
        <FunnelArt />
        <path d="M18 19h7l-3.500 4z" fill="#444" />
      </Svg>
    ),
  },
  {
    name: 'Filter Legend by Expression',
    disabled: true,
    menu: true,
    icon: (
      <Svg size={16}>
        <text x="0" y="14" fontSize="22" fontFamily="Noto Sans, sans-serif" fill="#777">
          ε
        </text>
        <path d="M11 12h12v4l-4 3v5h-4v-5l-4-3z" fill="#999" />
      </Svg>
    ),
  },
  {
    name: 'Expand All',
    icon: (
      <Svg size={16}>
        <ExpandArt />
      </Svg>
    ),
  },
  {
    name: 'Collapse All Layers',
    icon: (
      <Svg size={16}>
        <CollapseArt />
      </Svg>
    ),
  },
  {
    name: 'Remove Layer',
    icon: (
      <Svg size={16}>
        <path d="M2.500 2H20v17H2.500z" fill="#f0f0ee" stroke="#8a8a85" strokeWidth="1.5" />
        <rect x="14" y="15" width="10" height="8" rx="2.5" fill="#e0484e" />
        <path d="M16 19h6" stroke="#fff" strokeWidth="1.8" />
      </Svg>
    ),
  },
];

const folderPath = 'M2 3.5h8l2 3h10v15H2z';

const browserItems: { name: string; expandable?: boolean; icon: React.ReactNode }[] = [
  {
    name: 'Favorites',
    icon: <path d="m12 1 3 8h8.500l-7 5 2.500 9-7-5.500L5 23l2.500-9-7-5H9z" fill="#fdf04a" stroke="#d0a92c" strokeWidth="1.3" />,
  },
  { name: 'Spatial Bookmarks', expandable: true, icon: <BookmarkArt /> },
  {
    name: 'Home',
    expandable: true,
    icon: (
      <g>
        <path d={folderPath} fill="#f2f2f2" stroke="#888" strokeWidth="1.5" />
        <path d="M6.500 14 12 9l5.500 5M8 13.500v5.500h8v-5.500" stroke="#333" strokeWidth="1.5" fill="#fff" />
      </g>
    ),
  },
  { name: '/', expandable: true, icon: <path d={folderPath} fill="#f2f2f2" stroke="#888" strokeWidth="1.5" /> },
  { name: 'GeoPackage', icon: <PackageArt /> },
  { name: 'SpatiaLite', icon: <Feather /> },
  {
    name: 'PostgreSQL',
    icon: (
      <g>
        <path d="M4 2c4-2 6 0 8 0s8-2 11 2c1 4-2 8-4 11l4 1-4 2h-3c0 3 0 5-3 5.500-3 .5-3-3-3-6l-4 2C3 17 0 9 1 5c.5-2 1.500-2.500 3-3z" fill="#6b94c6" stroke="#4a6a92" strokeWidth="1.2" />
        <path d="M8 4c-2 4-1 8 0 11M16 4c3 4 0 7 1 11M11 8h1" stroke="#34516e" strokeWidth="1.2" />
      </g>
    ),
  },
  {
    name: 'SAP HANA',
    icon: (
      <g>
        <path d="M1.500 0v24M22.500 0v24M0 1.500h24M0 22.500h24" stroke="#4a6482" strokeWidth="2" strokeDasharray="1.500 1.500" />
        <rect x="4.5" y="4.5" width="15" height="15" fill="#6b97ca" />
      </g>
    ),
  },
  {
    name: 'STAC',
    icon: (
      <g>
        <path d="M1.500 2.500h12v12h-12z" fill="#f0f5fb" stroke="#c3d5ea" strokeWidth="1.5" />
        <path d="M5 6h13v13H5z" fill="#e4edf7" stroke="#a9c4e2" strokeWidth="1.5" />
        <path d="M9 9.500h13.500v13H9z" fill="#dfe8f2" stroke="#71879f" strokeWidth="1.5" />
        <circle cx="15.7" cy="16" r="4" fill="#b9cde4" stroke="#5a7898" strokeWidth="1.3" />
        <path d="m12 20 7-8" stroke="#5a7898" strokeWidth="1.5" />
      </g>
    ),
  },
  {
    name: 'MS SQL Server',
    icon: (
      <g>
        <path d="M1 1c8 0 17 4 22.500 11.500C16 13 8 16 2 21.500 7 15 6 7 1 1z" fill="#5f8abc" stroke="#4a6f99" />
        <path d="M9 3c2 5 2 9 0 13M14 5c2 4 2 6 1 9M19 8c1 2 1 4 0 5" stroke="#a9c4e2" />
      </g>
    ),
  },
  { name: 'WMS/WMTS', icon: <GlobeArt /> },
  {
    name: 'Cloud',
    icon: <path d="M4 19c-3.500 0-4-5-.5-6C3 9 6 8 7.500 9 8 3 16 3 17 9c2-.5 3 1 3 3 4 0 4 7 0 7z" fill="#b5cce6" stroke="#6484aa" strokeWidth="1.5" />,
  },
  {
    name: 'Scenes',
    icon: (
      <g stroke="#4a6585" strokeWidth="1.3">
        <path d="M3 6.500 12.500 1 21.500 6v11.500L12 23 3 17.500z" fill="#b3cae4" />
        <path d="m3 6.500 9 4.500 9.500-5M12 11v12M7 4l10 5" />
        <path d="m12 11 9.500-5v11.500L12 23z" fill="#86a9d0" />
      </g>
    ),
  },
  {
    name: 'SensorThings',
    icon: (
      <g stroke="#56697e" strokeWidth="1.5">
        <circle cx="12" cy="11.500" r="4" fill="#4f7db4" />
        <path d="M6.500 6c-2.500 3.500-2.500 8 0 11M17.500 6c2.500 3.500 2.500 8 0 11M3 4.500c-3 5-3 9.500 0 14M21 4.500c3 5 3 9.500 0 14" />
      </g>
    ),
  },
  {
    name: 'Vector Tiles',
    icon: (
      <g>
        <path d="M2 2h20v20H2z" fill="#c3d5ea" stroke="#4a5a6c" strokeWidth="1.8" />
        <path d="M8.500 2v20M15.500 2v20M2 8.500h20M2 15.500h20" stroke="#4a5a6c" strokeWidth="1.800" />
      </g>
    ),
  },
  {
    name: 'XYZ Tiles',
    expandable: true,
    icon: (
      <path d="M1.500 1.500H7V7H1.500zM9.500 1.500H15V7H9.500zM17.500 1.500H23V7h-5.500zM1.500 9.500H7V15H1.500zM9.500 9.500H15V15H9.500zM17.500 9.500H23V15h-5.500zM1.500 17.500H7V23H1.500zM9.500 17.500H15V23H9.500zM17.500 17.500H23V23h-5.500z" fill="#6b97ca" />
    ),
  },
  { name: 'WCS', icon: <WireGlobe color="#34506f" fill="#86a9d0" width={1.9} /> },
  {
    name: 'WFS / OGC API - Features',
    icon: (
      <g>
        <WireGlobe color="#8fb3dc" fill="#f4f8fc" />
        <path d="M6 6.500 11 18l4-9c.5-2 2-2.500 4-2.500" stroke="#5a6a7c" strokeWidth="1.7" />
      </g>
    ),
  },
  {
    name: 'ArcGIS REST Servers',
    icon: (
      <g>
        <WireGlobe color="#a9c4e2" fill="#dce8f5" />
        <path d="M14 4l6 1 3 7-3 4-3 5-2-5z" fill="#7ba3d3" />
        <path d="M5 6.500 10 18l3-9c.5-2 2-2.500 4-2.500" stroke="#5a6a7c" strokeWidth="1.6" />
      </g>
    ),
  },
];

const menus = [
  { label: 'Project', key: 3 },
  { label: 'Edit', key: 0 },
  { label: 'View', key: 0 },
  { label: 'Layer', key: 0 },
  { label: 'Settings', key: 0 },
  { label: 'Plugins', key: 0 },
  { label: 'Vector', key: 4 },
  { label: 'Raster', key: 0 },
  { label: 'Database', key: 0 },
  { label: 'Web', key: 0 },
  { label: 'Mesh', key: 0 },
  { label: 'Processing', key: 3 },
  { label: 'Help', key: 0 },
];

const Arrow = ({ disabled }: any) => (
  <svg width="8" height="5" viewBox="0 0 8 5" aria-hidden="true">
    <path d="M0 0h8L4 4.500z" fill={disabled ? '#a5a5a5' : '#4a4a4a'} />
  </svg>
);

const Handle = () => (
  <svg width="6" height="18" viewBox="0 0 6 18" className="mx-[5px] shrink-0" shapeRendering="crispEdges" aria-hidden="true">
    <path d="M1.500 0v18M4.500 0v18" stroke="#b4b4b4" strokeDasharray="1 2" />
  </svg>
);

const ToolGroup = ({ tools }: { tools: Tool[] }) => (
  <div className="flex items-center">
    <Handle />
    {tools.map((tool) =>
      tool.separator ? (
        <div key={tool.name} className="mx-[3px] h-5 w-px bg-[#d6d6d6]" />
      ) : (
        <button
          key={tool.name}
          type="button"
          aria-label={tool.name}
          disabled={tool.disabled}
          className={clsx(
            'mx-px flex h-[31px] items-center rounded-[3px] border',
            tool.menu ? 'w-[43px] gap-1.5 pl-[3px]' : 'w-[31px] justify-center',
            tool.active ? 'border-[#b5b5b5] bg-[#e6e6e6]' : 'border-transparent',
          )}
        >
          <span className={tool.disabled ? 'opacity-30' : ''}>{tool.icon}</span>
          {tool.menu && <Arrow disabled={tool.disabled} />}
        </button>
      ),
    )}
  </div>
);

const DockToolbar = ({ tools }: { tools: Tool[] }) => (
  <div className="flex h-[31px] shrink-0 items-center pb-px pl-[3px]">
    {tools.map((tool) => (
      <button
        key={tool.name}
        type="button"
        aria-label={tool.name}
        disabled={tool.disabled}
        className={clsx('flex h-6 items-center pl-[5px]', tool.menu ? 'w-[37px] gap-1' : 'w-[25px]')}
      >
        <span className={tool.disabled ? 'opacity-35' : ''}>{tool.icon}</span>
        {tool.menu && <Arrow disabled />}
      </button>
    ))}
  </div>
);

const DockTitle = ({ title }: { title: string }) => (
  <div className="flex h-5 shrink-0 items-center pr-[5px] pl-1">
    <h2 className="flex-1">{title}</h2>
    <div className="flex gap-[9px] pb-0.5">
      <button type="button" aria-label={`Float ${title}`} className="flex size-[10px] items-center justify-center rounded-[2px] border border-[#b4b4b4] bg-[#e6e6e6]">
        <svg width="6" height="6" viewBox="0 0 6 6" fill="none" stroke="#666" aria-hidden="true">
          <path d="M.5 1.500h4v4h-4zM2 .5h3.500V4" />
        </svg>
      </button>
      <button type="button" aria-label={`Close ${title}`} className="flex size-[10px] items-center justify-center rounded-[2px] border border-[#b4b4b4] bg-[#e6e6e6]">
        <svg width="6" height="6" viewBox="0 0 6 6" stroke="#444" strokeWidth="1.2" aria-hidden="true">
          <path d="m0 0 6 6M6 0 0 6" />
        </svg>
      </button>
    </div>
  </div>
);

const SpinBox = ({ id, value, onChange, className }: any) => (
  <div className={clsx('flex rounded-[3px] border border-[#b4b4b4] bg-[#fafafa]', className)}>
    <input id={id} value={value} onChange={onChange} className="min-w-0 flex-1 bg-transparent pl-1 outline-none" />
    <div className="flex w-[14px] flex-col items-center justify-center gap-[5px] border-l border-[#b4b4b4]">
      <button type="button" aria-label={`Increase ${id}`} className="rotate-180">
        <svg width="7" height="4" viewBox="0 0 7 4" className="block" aria-hidden="true">
          <path d="M0 0h7L3.500 4z" fill="#555" />
        </svg>
      </button>
      <button type="button" aria-label={`Decrease ${id}`}>
        <svg width="7" height="4" viewBox="0 0 7 4" className="block" aria-hidden="true">
          <path d="M0 0h7L3.500 4z" fill="#555" />
        </svg>
      </button>
    </div>
  </div>
);

const App = () => {
  const [search, setSearch] = useState('');
  const [coordinate, setCoordinate] = useState('');
  const [scale, setScale] = useState('1:1');
  const [magnifier, setMagnifier] = useState('100%');
  const [rotation, setRotation] = useState('0.0 °');
  const [render, setRender] = useState(true);

  return (
    <div className="flex h-screen flex-col overflow-hidden bg-[#fcfcfc] font-['Noto_Sans',sans-serif] text-[13px] leading-5 text-[#141414]">
      <nav className="flex h-[23px] shrink-0 items-center border-b border-[#dedede] pl-[3px]">
        {menus.map(({ label, key }) => (
          <button key={label} type="button" className="pr-2 pl-[7px]">
            {label.slice(0, key)}
            <span className="underline underline-offset-2">{label[key]}</span>
            {label.slice(key + 1)}
          </button>
        ))}
      </nav>
      <div className="flex h-[39px] shrink-0 items-center border-b border-[#bababa] bg-linear-to-b from-[#fdfdfd] to-[#fafafa]">
        <div className="-ml-1 flex">
          <ToolGroup tools={fileTools} />
          <ToolGroup tools={navTools} />
          <ToolGroup tools={selectTools} />
          <ToolGroup tools={attributeTools} />
        </div>
      </div>
      <div className="flex h-[39px] shrink-0 items-center border-b border-[#bababa] bg-linear-to-b from-[#fdfdfd] to-[#fafafa]">
        <div className="-ml-1 flex items-center">
          <ToolGroup tools={sourceTools} />
          <ToolGroup tools={editTools} />
          <ToolGroup tools={labelTools} />
          <ToolGroup tools={searchTools} />
          <ToolGroup tools={pythonTools} />
          <ToolGroup tools={helpTools} />
          <Handle />
        </div>
      </div>

      <div className="flex min-h-0 flex-1">
        <aside className="flex w-[294px] shrink-0 flex-col">
          <section className="flex min-h-0 flex-1 flex-col">
            <DockTitle title="Browser" />
            <DockToolbar tools={browserTools} />
            <ul className="min-h-0 flex-1 overflow-hidden border border-[#bababa]">
              {browserItems.map((item) => (
                <li key={item.name} className="flex h-5 items-center">
                  <span className="flex w-[19px] pl-1.5">
                    {item.expandable && (
                      <button type="button" aria-label={`Expand ${item.name}`}>
                        <svg width="5" height="8" viewBox="0 0 5 8" className="block" aria-hidden="true">
                          <path d="M0 0v8l4.500-4z" fill="#4a4a4a" />
                        </svg>
                      </button>
                    )}
                  </span>
                  <Svg size={16}>{item.icon}</Svg>
                  <span className="pl-1.5 whitespace-nowrap">{item.name}</span>
                </li>
              ))}
            </ul>
          </section>
          <div className="flex h-1.5 shrink-0 items-center justify-center">
            <div className="w-4 border-t border-dotted border-[#aaa]" />
          </div>
          <section className="flex min-h-0 flex-1 flex-col">
            <DockTitle title="Layers" />
            <DockToolbar tools={layerTools} />
            <div className="min-h-0 flex-1 border border-[#bababa]" />
          </section>
        </aside>
        <div className="flex w-1.5 shrink-0 items-center justify-center">
          <div className="h-4 border-l border-dotted border-[#aaa]" />
        </div>
        <main className="flex min-w-0 flex-1 flex-col border-x border-b border-[#bababa] bg-white">
          <div className="-ml-px flex h-[41px] items-center border border-[#dca800] bg-[#ffc800] pr-[21px] pb-0.5 pl-[10px]">
            <svg width="22" height="21" viewBox="0 0 22 21" fill="none" aria-hidden="true">
              <path d="M11 1 21 20H1z" stroke="#c8560a" strokeWidth="1.3" strokeLinejoin="round" />
              <path d="M9.200 6h3.600l-.8 7.500h-2z" fill="#a05a14" />
              <circle cx="11" cy="16" r="1.5" fill="#a05a14" />
            </svg>
            <p className="flex-1 pl-[11px] whitespace-nowrap">
              <b>DB Manager:</b> The DB Manager plugin will be removed in a future QGIS release. Please install the "DB Manager (community)"
              replacement plugin instead.
            </p>
            <button type="button" className="h-[26px] rounded-[3px] border border-[#b9b9b9] bg-[#fdfdfd] px-[7px]">
              Install Now
            </button>
            <button type="button" aria-label="Close message" className="ml-8">
              <svg width="18" height="18" viewBox="0 0 18 18" className="block" aria-hidden="true">
                <circle cx="9" cy="9" r="8.5" fill="#332a08" />
                <path d="m5.500 5.500 7 7M12.500 5.500l-7 7" stroke="#fff" strokeWidth="2.5" />
              </svg>
            </button>
          </div>
        </main>
      </div>

      <footer className="flex h-8 shrink-0 items-center pr-px pl-1 text-[11px]">
        <label className="flex h-[26px] w-[241px] items-center rounded-[3px] border border-[#b4b4b4] bg-[#fafafa] pl-2">
          <svg width="13" height="13" viewBox="0 0 13 13" fill="none" stroke="#888" strokeWidth="1.3" aria-hidden="true">
            <circle cx="5.5" cy="5.5" r="4.5" />
            <path d="m9 9 3.500 3.500" />
          </svg>
          <input
            aria-label="Locator"
            value={search}
            onChange={(e) => setSearch(e.target.value)}
            placeholder="Type to locate (Ctrl+K)"
            className="min-w-0 flex-1 bg-transparent pl-[7px] text-[13px] outline-none placeholder:text-[#707070]"
          />
        </label>
        <span className="flex-1 pl-2">Ready</span>

        <label htmlFor="coordinate">Coordinate</label>
        <input
          id="coordinate"
          value={coordinate}
          onChange={(e) => setCoordinate(e.target.value)}
          className="ml-1 h-[23px] w-10 rounded-[3px] border border-[#b4b4b4] bg-[#fafafa] px-1 outline-none"
        />
        <button type="button" aria-label="Toggle Extents" className="ml-1">
          <svg width="16" height="16" viewBox="0 0 16 16" fill="none" className="block" aria-hidden="true">
            <ellipse cx="9.5" cy="10" rx="4" ry="5" fill="#ddd" stroke="#222" strokeWidth="1.5" transform="rotate(-35 9.5 10)" />
            <path d="m1 4 5 3M1 8l4 1M3 1l4 5M6 1l2 4M9 1v5M8 8l4 2M7 12l4-3M11 4l4-3M12 6l2-2" stroke="#333" strokeWidth="1.4" />
            <circle cx="10" cy="11.5" r="1.5" fill="#fff" stroke="#222" />
          </svg>
        </button>
        <label htmlFor="scale" className="ml-[13px]">
          Scale
        </label>
        <div className="relative ml-1">
          <select
            id="scale"
            value={scale}
            onChange={(e) => setScale(e.target.value)}
            className="block h-[26px] w-[92px] appearance-none rounded-[3px] border border-[#b4b4b4] bg-[#fafafa] pl-1 text-[13px] outline-none"
          >
            <option>1:1</option>
          </select>
          <span className="pointer-events-none absolute inset-y-px right-px flex w-5 items-center justify-center border-l border-[#b4b4b4]">
            <Arrow />
          </span>
        </div>
        <button type="button" aria-label="Lock scale" className="ml-3">
          <svg width="12" height="16" viewBox="0 0 12 16" className="block" aria-hidden="true">
            <path d="M3 8V4.500a3 3 0 0 1 6 0V8" fill="none" stroke="#777" strokeWidth="1.5" />
            <rect y="7" width="12" height="8.5" rx="1" fill="#666" />
          </svg>
        </button>
        <label htmlFor="magnifier" className="ml-[9px]">
          Magnifier
        </label>
        <SpinBox id="magnifier" value={magnifier} onChange={(e: any) => setMagnifier(e.target.value)} className="ml-[3px] h-[25px] w-[90px]" />
        <label htmlFor="rotation" className="ml-[9px]">
          Rotation
        </label>
        <SpinBox id="rotation" value={rotation} onChange={(e: any) => setRotation(e.target.value)} className="ml-[9px] h-[21px] w-[106px]" />
        <label className="ml-1.5 flex items-center gap-[5px]">
          <span className="relative flex">
            <input
              type="checkbox"
              checked={render}
              onChange={(e) => setRender(e.target.checked)}
              className="size-[14px] appearance-none border border-[#b4b4b4] bg-[#fdfdfd]"
            />
            {render && (
              <svg width="14" height="14" viewBox="0 0 14 14" fill="none" className="pointer-events-none absolute inset-0" aria-hidden="true">
                <path d="m3.500 7 2.500 3.500L10.500 3" stroke="#222" strokeWidth="1.8" />
              </svg>
            )}
          </span>
          Render
        </label>
        <button type="button" className="ml-[15px] flex items-center gap-[3px]">
          <svg width="15" height="14" viewBox="0 0 15 14" fill="none" stroke="#777" aria-hidden="true">
            <path d="M7.500.5C3 1 1 4 .5 7c2 1 12 1 14 0C14 4 12 1 7.500.5z" fill="#ccc" />
            <path d="M.5 7l7 6.500 7-6.500M7.500.5v13M2 4h11M4 7.500C4 4 5 2 7.500.5 10 2 11 4 11 7.500c0 2-1 4-3.500 6-2.500-2-3.500-4-3.500-6z" strokeWidth=".8" />
          </svg>
          EPSG:4326
        </button>
        <button type="button" aria-label="Messages" className="ml-[23px]">
          <svg width="17" height="15" viewBox="0 0 17 15" className="block" aria-hidden="true">
            <path d="M8.500 0C13 0 16.500 2.500 16.500 6.300c0 2-.5 3.200-1.500 4.200v4l-3.500-2.500C5 13.500.5 10.500.5 6.300.5 2.500 4 0 8.500 0z" fill="#555" />
            <path d="M4 6.500h2M7.500 6.500h2M11 6.500h2" stroke="#fff" strokeWidth="2" />
          </svg>
        </button>
        <svg width="11" height="11" viewBox="0 0 11 11" fill="#bbb" className="mt-auto mb-0.5 ml-[17px]" aria-hidden="true">
          <path d="M9 0h1v1H9zM6 3h1v1H6zM9 3h1v1H9zM3 6h1v1H3zM6 6h1v1H6zM9 6h1v1H9zM0 9h1v1H0zM3 9h1v1H3zM6 9h1v1H6zM9 9h1v1H9z" />
        </svg>
      </footer>
    </div>
  );
};

export default App;
